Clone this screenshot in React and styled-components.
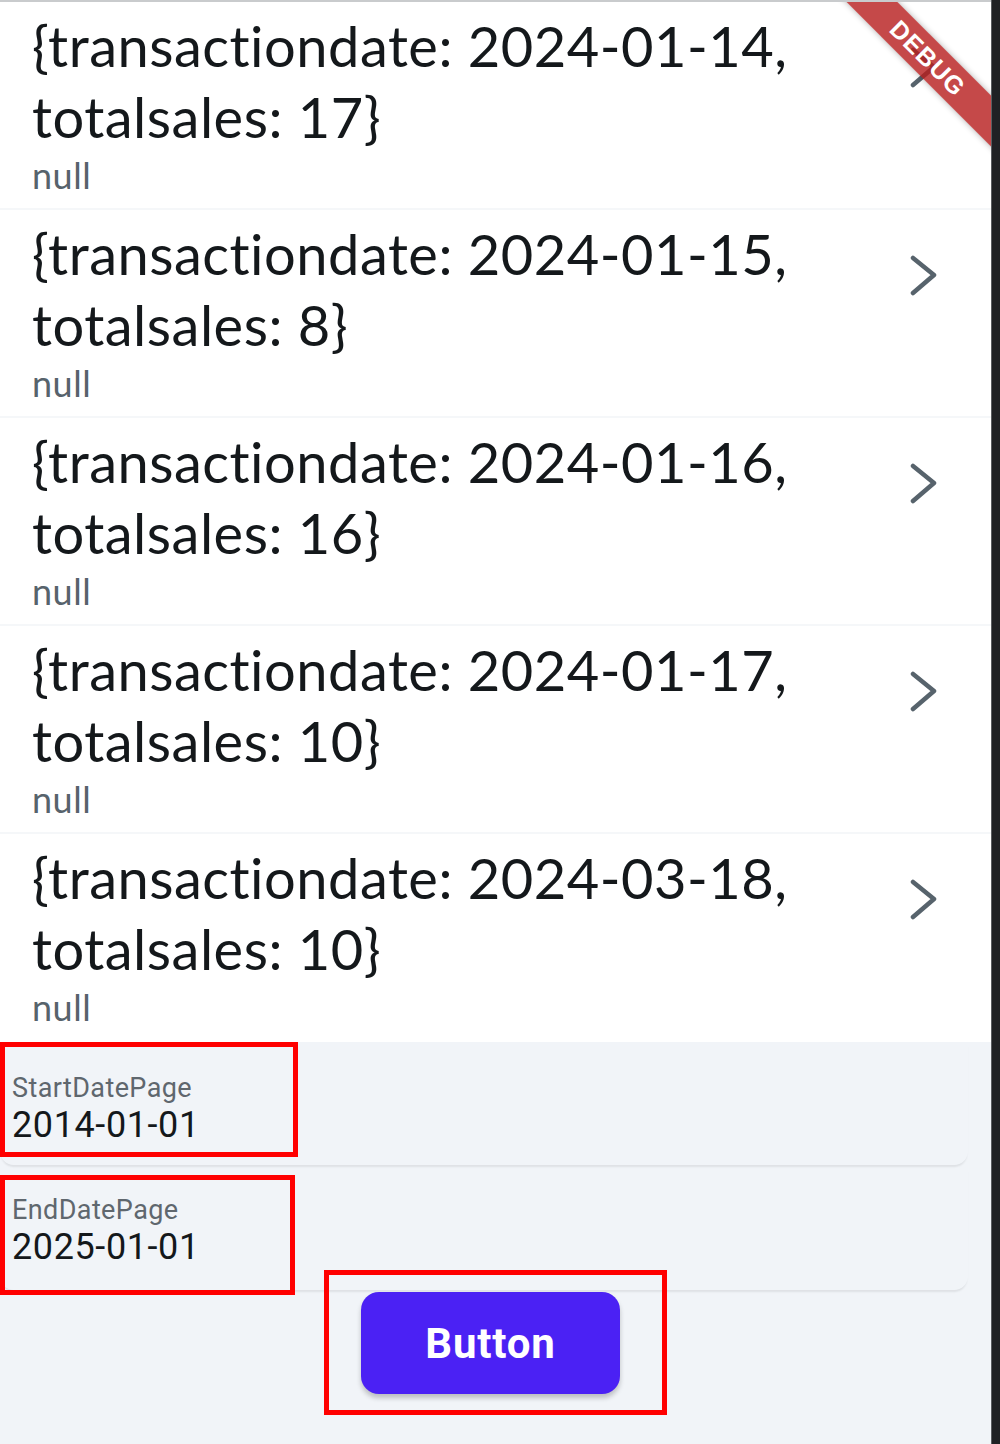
import React from 'react';
import styled, { createGlobalStyle } from 'styled-components';

const GlobalStyle = createGlobalStyle`
  html, body {
    margin: 0;
    padding: 0;
    background: #f1f4f8;
  }
  * {
    box-sizing: border-box;
  }
`;

const Frame = styled.div`
  display: flex;
  width: 1000px;
  height: 1444px;
  overflow: hidden;
`;

const Screen = styled.div`
  position: relative;
  flex: 1;
  display: flex;
  flex-direction: column;
  background: #f1f4f8;
  border-top: 2px solid #c9cbcd;
  overflow: hidden;
`;

const EdgeBar = styled.div`
  width: 9px;
  background: #1f2124;
  border-left: 1px solid #5a5d61;
`;

const List = styled.div`
  display: flex;
  flex-direction: column;
  background: #ffffff;
`;

const Row = styled.div`
  display: flex;
  align-items: flex-start;
  height: 208px;
  padding: 8px 0 0 32px;
  background: #ffffff;
  border-bottom: ${(p) => (p.$last ? 'none' : '2px solid #f5f7f9')};
`;

const RowText = styled.div`
  flex: 1;
  display: flex;
  flex-direction: column;
`;

const Title = styled.div`
  font-family: 'Lato', 'Liberation Sans', sans-serif;
  font-size: 56px;
  line-height: 71px;
  letter-spacing: 0.5px;
  color: #14181b;
  max-width: 840px;
`;

const Subtitle = styled.div`
  font-family: 'Lato', 'Liberation Sans', sans-serif;
  font-size: 36px;
  line-height: 42px;
  letter-spacing: 0.5px;
  margin-top: 2px;
  color: #57636c;
`;

const Chevron = styled.svg`
  flex: none;
  width: 30px;
  height: 42px;
  margin: 37px 53px 0 0;
`;

const Form = styled.div`
  display: flex;
  flex-direction: column;
  gap: 2px;
`;

const Field = styled.div`
  height: 123px;
  width: 968px;
  border-radius: 0 0 14px 14px;
  box-shadow: 0 3px 2px -1px rgba(0, 0, 0, 0.08);
`;

const Marked = styled.div`
  display: flex;
  flex-direction: column;
  width: ${(p) => p.$w}px;
  height: ${(p) => p.$h}px;
  margin-top: ${(p) => p.$top}px;
  padding: ${(p) => p.$pad}px 0 0 7px;
  border: 5px solid #ff0000;
`;

const Label = styled.div`
  font-family: 'Roboto', 'Liberation Sans', sans-serif;
  font-size: 27px;
  line-height: 31px;
  letter-spacing: 0.4px;
  color: #5f676e;
`;

const Value = styled.div`
  font-family: 'Roboto', 'Liberation Sans', sans-serif;
  font-size: 36px;
  line-height: 42px;
  letter-spacing: 0.6px;
  color: #14181b;
`;

const ButtonFrame = styled.div`
  align-self: center;
  margin-top: -22px;
  padding: 17px 42px 16px 32px;
  border: 5px solid #ff0000;
`;

const PrimaryButton = styled.button`
  display: flex;
  align-items: center;
  justify-content: center;
  width: 259px;
  height: 102px;
  border: none;
  border-radius: 18px;
  background: #4b21f4;
  color: #ffffff;
  font-family: 'Roboto', 'Liberation Sans', sans-serif;
  font-weight: 700;
  font-size: 42px;
  letter-spacing: 0.8px;
  box-shadow: 0 4px 5px rgba(0, 0, 0, 0.22);
`;

const DebugBanner = styled.div`
  position: absolute;
  left: 808px;
  top: 38px;
  width: 240px;
  height: 36px;
  transform: rotate(45deg);
  display: flex;
  align-items: center;
  justify-content: center;
  background: rgba(183, 28, 28, 0.8);
  box-shadow: 0 0 6px rgba(0, 0, 0, 0.3);
  color: #ffffff;
  font-family: 'Liberation Sans', sans-serif;
  font-weight: 700;
  font-size: 25px;
  letter-spacing: 1px;
`;

const rows = [
  { date: '2024-01-14', sales: 17 },
  { date: '2024-01-15', sales: 8 },
  { date: '2024-01-16', sales: 16 },
  { date: '2024-01-17', sales: 10 },
  { date: '2024-03-18', sales: 10 },
];

const ChevronIcon = () => (
  <Chevron viewBox="0 0 30 42">
    <polyline points="5,3 26,20 5,38" fill="none" stroke="#57636c" strokeWidth="4.5" strokeLinecap="round" strokeLinejoin="round" />
  </Chevron>
);

export default function App() {
  return (
    <>
      <GlobalStyle />
      <Frame>
        <Screen>
          <List>
            {rows.map((r, i) => (
              <Row key={r.date} $last={i === rows.length - 1}>
                <RowText>
                  <Title>{`{transactiondate: ${r.date}, totalsales: ${r.sales}}`}</Title>
                  <Subtitle>null</Subtitle>
                </RowText>
                <ChevronIcon />
              </Row>
            ))}
          </List>
          <Form>
            <Field>
              <Marked $w={298} $h={115} $top={0} $pad={26}>
                <Label>StartDatePage</Label>
                <Value>2014-01-01</Value>
              </Marked>
            </Field>
            <Field>
              <Marked $w={295} $h={120} $top={8} $pad={15}>
                <Label>EndDatePage</Label>
                <Value>2025-01-01</Value>
              </Marked>
            </Field>
            <ButtonFrame>
              <PrimaryButton>Button</PrimaryButton>
            </ButtonFrame>
          </Form>
          <DebugBanner>DEBUG</DebugBanner>
        </Screen>
        <EdgeBar />
      </Frame>
    </>
  );
}
